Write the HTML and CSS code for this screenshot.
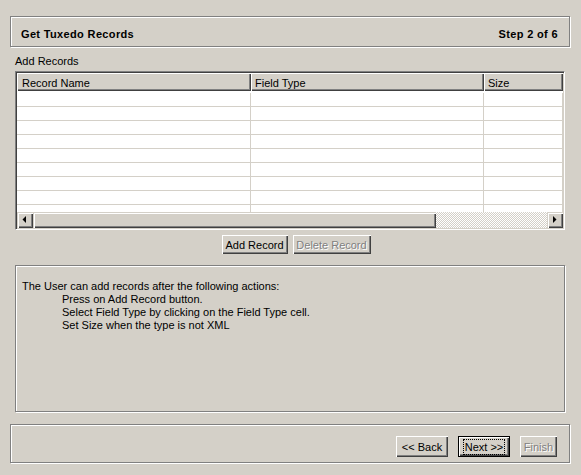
FILE: index.html
```html
<!DOCTYPE html>
<html>
<head>
<meta charset="utf-8">
<link rel="stylesheet" href="styles.css">
</head>
<body>
<div class="wizard">
  <div class="title-box">
    <span class="title">Get Tuxedo Records</span>
    <span class="title">Step 2 of 6</span>
  </div>
  <div class="content">
    <div class="label">Add Records</div>
    <div class="table">
      <div class="thead">
        <div class="th">Record Name</div>
        <div class="th">Field Type</div>
        <div class="th">Size</div>
      </div>
      <div class="tbody">
        <div class="tr"><div class="td"></div><div class="td"></div><div class="td"></div></div>
        <div class="tr"><div class="td"></div><div class="td"></div><div class="td"></div></div>
        <div class="tr"><div class="td"></div><div class="td"></div><div class="td"></div></div>
        <div class="tr"><div class="td"></div><div class="td"></div><div class="td"></div></div>
        <div class="tr"><div class="td"></div><div class="td"></div><div class="td"></div></div>
        <div class="tr"><div class="td"></div><div class="td"></div><div class="td"></div></div>
        <div class="tr"><div class="td"></div><div class="td"></div><div class="td"></div></div>
        <div class="tr"><div class="td"></div><div class="td"></div><div class="td"></div></div>
        <div class="tr"><div class="td"></div><div class="td"></div><div class="td"></div></div>
      </div>
      <div class="hscroll">
        <div class="sbtn"><svg width="16" height="16" viewBox="0 0 16 16"><polygon points="9,4 9,11 5.5,7.5" fill="#000"/></svg></div>
        <div class="thumb"></div>
        <div class="track"></div>
        <div class="sbtn"><svg width="16" height="16" viewBox="0 0 16 16"><polygon points="6,4 6,11 9.5,7.5" fill="#000"/></svg></div>
      </div>
    </div>
    <div class="actions">
      <button class="btn add">Add Record</button>
      <button class="btn del disabled">Delete Record</button>
    </div>
    <div class="desc">
      <div>The User can add records after the following actions:</div>
      <div class="indent">Press on Add Record button.</div>
      <div class="indent">Select Field Type by clicking on the Field Type cell.</div>
      <div class="indent">Set Size when the type is not XML</div>
    </div>
  </div>
  <div class="footer">
    <button class="btn nav back">&lt;&lt; Back</button>
    <button class="btn nav default"><span class="focus">Next &gt;&gt;</span></button>
    <button class="btn nav finish disabled">Finish</button>
  </div>
</div>
</body>
</html>
```

FILE: styles.css
```css
html, body {
  margin: 0;
  padding: 0;
  background: #d4d0c8;
}
body {
  font-family: Tahoma, "Liberation Sans", Arial, sans-serif;
  font-size: 11px;
  color: #000;
  width: 581px;
  height: 475px;
  overflow: hidden;
}
.wizard {
  padding: 16px 11px 0 10px;
}
.title-box {
  height: 29px;
  border: 1px solid #808080;
  box-shadow: inset 1px 1px 0 #fff, 1px 1px 0 #fff;
  display: flex;
  align-items: center;
  justify-content: space-between;
  padding: 0 11px 0 10px;
}
.title {
  font-weight: bold;
  letter-spacing: 0.35px;
  padding-top: 4px;
}
.content {
  padding: 0 5px;
}
.label {
  margin-top: 7px;
  height: 14px;
  line-height: 14px;
  margin-bottom: 3px;
}
.table {
  height: 155px;
  border: 1px solid;
  border-color: #808080 #fff #fff #808080;
  box-shadow: inset 1px 1px 0 #404040, inset -1px -1px 0 #d4d0c8;
  padding: 1px;
  display: flex;
  flex-direction: column;
  overflow: hidden;
}
.thead {
  display: grid;
  grid-template-columns: 234px 233px 1fr;
  height: 18px;
  flex: none;
}
.th {
  background: #d4d0c8;
  box-shadow: inset 1px 1px 0 #fff, inset -1px -1px 0 #404040, inset -2px -2px 0 #808080;
  padding-left: 5px;
  padding-top: 1px;
  line-height: 18px;
  white-space: nowrap;
  overflow: hidden;
}
.th + .th {
  padding-left: 4px;
}
.tbody {
  flex: 1;
  background: #fff;
  padding-top: 2px;
  overflow: hidden;
}
.tr {
  display: grid;
  grid-template-columns: 234px 233px 1fr;
  height: 13px;
  border-bottom: 1px solid #d4d0c8;
}
.td {
  border-right: 1px solid #d4d0c8;
}
.hscroll {
  flex: none;
  height: 16px;
  display: flex;
}
.sbtn, .thumb {
  background: #d4d0c8;
  box-shadow: inset 1px 1px 0 #d4d0c8, inset 2px 2px 0 #fff, inset -1px -1px 0 #404040, inset -2px -2px 0 #808080;
}
.sbtn {
  width: 16px;
  height: 16px;
  flex: none;
}
.sbtn svg {
  display: block;
}
.thumb {
  width: 403px;
  flex: none;
}
.track {
  flex: 1;
  background-color: #fff;
  background-image:
    linear-gradient(45deg, #d4d0c8 25%, transparent 25%, transparent 75%, #d4d0c8 75%),
    linear-gradient(45deg, #d4d0c8 25%, transparent 25%, transparent 75%, #d4d0c8 75%);
  background-size: 2px 2px;
  background-position: 0 0, 1px 1px;
}
.actions {
  display: flex;
  justify-content: center;
  gap: 5px;
  margin-top: 5px;
  padding-left: 12px;
}
.btn {
  font-family: inherit;
  font-size: 11px;
  color: #000;
  background: #d4d0c8;
  border: none;
  margin: 0;
  padding: 0;
  height: 19px;
  box-shadow: inset 1px 1px 0 #fff, inset -1px -1px 0 #404040, inset -2px -2px 0 #808080;
  white-space: nowrap;
}
.add {
  width: 66px;
}
.del {
  width: 78px;
}
.btn.disabled {
  color: #808080;
  text-shadow: 1px 1px 0 #fff;
}
.desc {
  margin-top: 11px;
  height: 131px;
  border: 1px solid #808080;
  box-shadow: inset 1px 1px 0 #fff, 1px 1px 0 #fff;
  padding: 14px 6px 0 6px;
  line-height: 13px;
}
.indent {
  padding-left: 40px;
}
.footer {
  margin-top: 12px;
  border: 1px solid #808080;
  box-shadow: inset 1px 1px 0 #fff, 1px 1px 0 #fff;
  display: flex;
  justify-content: flex-end;
  align-items: flex-start;
  padding: 11px 12px 0 0;
  height: 26px;
}
.nav {
  height: 21px;
  margin-left: 10px;
}
.back {
  width: 52px;
}
.default {
  width: 52px;
  border: 1px solid #000;
  padding: 0 3px;
}
.focus {
  outline: 1px dotted #000;
  outline-offset: 0;
  padding: 1px 1px;
}
.finish {
  width: 37px;
}
```
